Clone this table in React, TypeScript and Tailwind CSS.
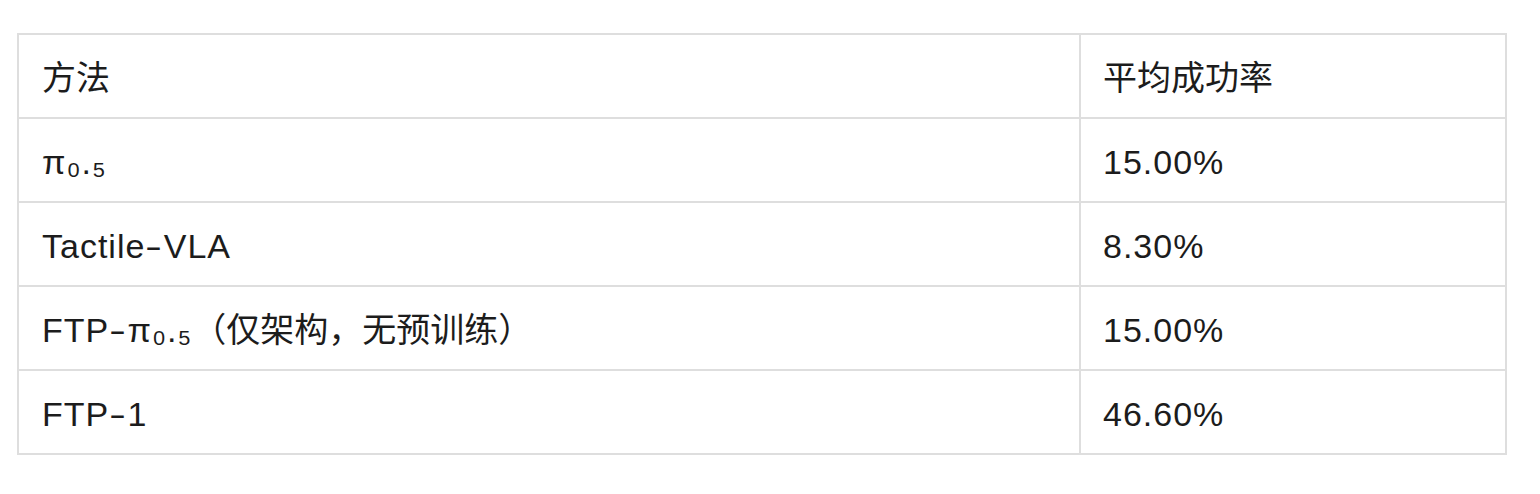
const rows: [string, string][] = [
  ["π₀.₅", "15.00%"],
  ["Tactile-VLA", "8.30%"],
  ["FTP-π₀.₅（仅架构，无预训练）", "15.00%"],
  ["FTP-1", "46.60%"],
];

// latin runs get a little tracking; cjk runs are left alone
const Mixed = ({ text }: { text: string }) => {
  const parts = text.split(/([\u3000-\u9fff\uff00-\uffef]+)/).filter(Boolean);
  return (
    <>
      {parts.map((p, i) =>
        /[\u3000-\u9fff\uff00-\uffef]/.test(p) ? (
          <span key={i}>{p}</span>
        ) : (
          <span key={i} className="tracking-[1px]">
            {p.split(/(-)/).map((s, j) =>
              s === "-" ? (
                <span key={j} className="mx-[3px] inline-block scale-x-150">
                  -
                </span>
              ) : (
                s
              )
            )}
          </span>
        )
      )}
    </>
  );
};

const cell = "h-[84px] border-2 border-[#dedede] text-left font-normal align-middle";

const App = () => {
  return (
    <div
      className="min-h-screen bg-white pt-[33px] pl-[17px] text-[#1c1c1c]"
      style={{ fontFamily: '"Liberation Sans", "Noto Sans CJK SC", sans-serif' }}
    >
      <table className="w-[1490px] border-collapse border-2 border-[#dedede] text-[34px] leading-none">
        <colgroup>
          <col className="w-[1062px]" />
          <col />
        </colgroup>
        <thead>
          <tr>
            <th className={`${cell} pl-[23px] pt-[4px]`}>方法</th>
            <th className={`${cell} pl-[22px] pt-[4px]`}>平均成功率</th>
          </tr>
        </thead>
        <tbody>
          {rows.map(([method, rate]) => (
            <tr key={method}>
              <td className={`${cell} pl-[23px] pt-[3px]`}>
                <Mixed text={method} />
              </td>
              <td className={`${cell} pl-[22px] pt-[3px]`}>
                <Mixed text={rate} />
              </td>
            </tr>
          ))}
        </tbody>
      </table>
    </div>
  );
};

export default App;
